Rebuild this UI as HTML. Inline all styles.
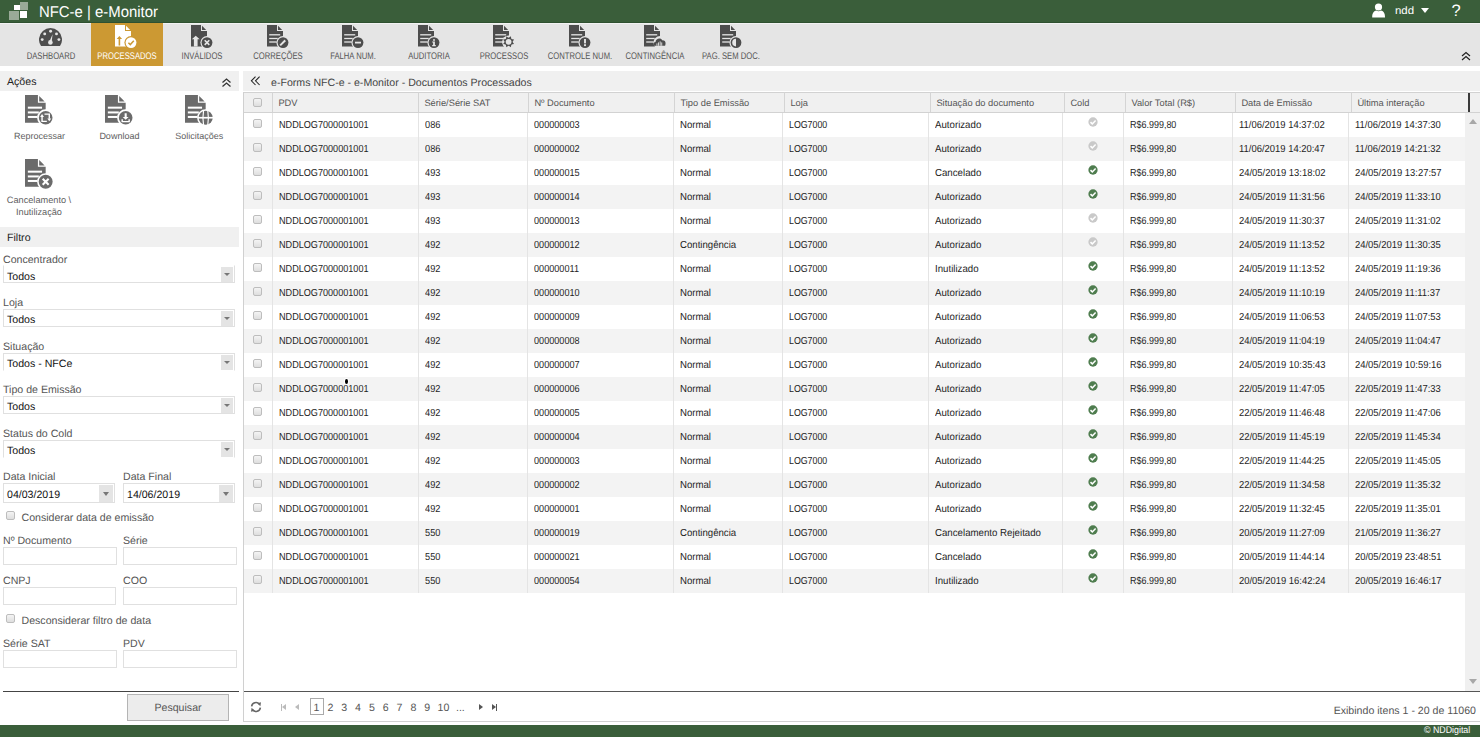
<!DOCTYPE html>
<html><head><meta charset="utf-8">
<style>
*{margin:0;padding:0;box-sizing:border-box}
html,body{width:1480px;height:737px;overflow:hidden;background:#fff;font-family:"Liberation Sans",sans-serif;color:#222;text-rendering:geometricPrecision}
.abs{position:absolute}
.t,.lbl,.hc,.ti .lb,.sel .v{translate:0 1px}
.t{position:absolute;white-space:nowrap;line-height:1}
#top{position:absolute;left:0;top:0;width:1480px;height:23px;background:#3a5e3a;border-bottom:1px solid #2f5130}
#tb{position:absolute;left:0;top:23px;width:1480px;height:43px;background:#e5e5e5;border-top:1px solid #f2f2f2}
.ti{position:absolute;top:0;height:43px}
.ti .lb{position:absolute;width:100px;left:-14px;top:26.5px;font-size:9.6px;line-height:1;color:#4a4a4a;white-space:nowrap;text-align:center;transform:scaleX(0.8);transform-origin:50% 0}
.act{background:#cc9933}
.bar{position:absolute;background:#f0f0f0}
.lbl{position:absolute;font-size:10.6px;line-height:1;color:#555;white-space:nowrap}
.inp{position:absolute;border:1px solid #e0e0e0;background:#fff;height:18px}
.sel .v{position:absolute;left:3px;top:4px;font-size:10.6px;line-height:1;color:#111;white-space:nowrap}
.sel .bt{position:absolute;right:1px;top:1px;width:12px;height:15px;background:#e4e4e4}
.sel .bt2:after{display:none}
.sel .bt:after{content:"";position:absolute;left:3px;top:6px;border-left:3px solid transparent;border-right:3px solid transparent;border-top:3px solid #777}
.cb{position:absolute;width:9px;height:9px;border:1px solid #bdbdbd;border-radius:2px;background:linear-gradient(#f4f4f4,#dedede)}
.hl{position:absolute;top:92px;width:1px;height:20px;background:#d4d4d4}
.bl{position:absolute;top:113px;width:1px;height:480px;background:#e4e4e4}
.row{position:absolute;left:244px;width:1221px;height:24px}
.c{position:absolute;font-size:10.2px;line-height:1;color:#1e1e1e;white-space:nowrap;transform-origin:0 0}
.hc{position:absolute;top:97.8px;font-size:9.3px;line-height:1;color:#555;white-space:nowrap}
</style></head><body>
<div id="top">
  <div class="abs" style="left:14px;top:5px;width:6px;height:5px;background:#fff"></div>
  <div class="abs" style="left:20px;top:2px;width:8px;height:8px;background:#9aaa98"></div>
  <div class="abs" style="left:9px;top:11px;width:10px;height:9px;background:#9aaa98"></div>
  <div class="abs" style="left:20px;top:11px;width:7px;height:7px;background:#fff"></div>
  <div class="t" style="left:39px;top:4px;font-size:15.6px;color:#fff;transform:scaleX(0.955);transform-origin:0 0">NFC-e | e-Monitor</div>
  <svg class="abs" style="left:1371px;top:2px" width="16" height="16" viewBox="0 0 16 16"><circle cx="7.5" cy="5" r="3.6" fill="#fff"/><path d="M1.2 15.5C1 10.5 3.5 9 5.2 8.6C6.6 9.6 8.6 9.6 10 8.6C11.8 9 14.2 10.5 14 15.5Z" fill="#fff"/></svg>
  <div class="t" style="left:1395px;top:4.5px;font-size:10.8px;color:#fff;transform:scaleX(1.06);transform-origin:0 0">ndd</div>
  <div class="abs" style="left:1421px;top:8px;border-left:4.5px solid transparent;border-right:4.5px solid transparent;border-top:5px solid #fff"></div>
  <div class="t" style="left:1451.5px;top:2px;font-size:16.5px;color:#fff">?</div>
</div>
<div id="tb"><div class="ti" style="left:15.1px;width:72px;"><svg class="abs" style="left:24.2px;top:3.9px" width="23" height="19" viewBox="0 0 23 19"><path d="M2.01 18.1A11.5 11.5 0 1 1 20.99 18.1Z" fill="#4d4d4d"/><circle cx="11.6" cy="3.3" r="1.45" fill="#e5e5e5"/><circle cx="5.7" cy="5.9" r="1.45" fill="#e5e5e5"/><circle cx="17.5" cy="5.9" r="1.45" fill="#e5e5e5"/><circle cx="3.2" cy="11.6" r="1.45" fill="#e5e5e5"/><circle cx="19.9" cy="11.6" r="1.45" fill="#e5e5e5"/><path d="M13.6 6.2L12.6 14L10.4 13.6Z" fill="#e5e5e5"/><circle cx="11.4" cy="14.4" r="2.3" fill="#e5e5e5"/></svg><div class="lb" style="color:#555;">DASHBOARD</div></div><div class="ti act" style="left:90.6px;width:72px;top:-1px;height:43px;"><svg class="abs" style="left:24.5px;top:2px;" width="24" height="24" viewBox="0 0 24 24"><path d="M0 0H10V6H16V21.5H0Z" fill="#fff"/><path d="M11 0.8L15.2 5H11Z" fill="#fff"/><path d="M1.7 13.9L4.4 10.9L7.1 13.9H5.2V20.6H3.6V13.9Z" fill="#cc9933"/><circle cx="16" cy="17.6" r="6.6" fill="#cc9933"/><circle cx="16" cy="17.6" r="5.4" fill="#fff"/><path d="M13.4 17.700000000000003L15.3 19.6L18.8 15.8" stroke="#cc9933" stroke-width="1.5" fill="none"/></svg><div class="lb" style="color:#fff;top:27.5px;">PROCESSADOS</div></div><div class="ti" style="left:166.1px;width:72px;"><svg class="abs" style="left:25px;top:1px;" width="24" height="24" viewBox="0 0 24 24"><path d="M0 0H10V6H16V21.5H0Z" fill="#4d4d4d"/><path d="M11 0.8L15.2 5H11Z" fill="#4d4d4d"/><path d="M0.8 14.2L4.75 10.8L8.7 14.2H6.6V21.5H2.9V14.2Z" fill="#e5e5e5"/><circle cx="16" cy="17.6" r="6.6" fill="#e5e5e5"/><circle cx="16" cy="17.6" r="5.4" fill="#4d4d4d"/><path d="M13.7 15.3L18.3 19.900000000000002M18.3 15.3L13.7 19.900000000000002" stroke="#e5e5e5" stroke-width="1.6"/></svg><div class="lb" style="color:#555;">INVÁLIDOS</div></div><div class="ti" style="left:241.6px;width:72px;"><svg class="abs" style="left:25px;top:1px;" width="24" height="24" viewBox="0 0 24 24"><path d="M0 0H10V6H16V21.5H0Z" fill="#4d4d4d"/><path d="M11 0.8L15.2 5H11Z" fill="#4d4d4d"/><rect x="2.2" y="9.15" width="11" height="1.3" fill="#e5e5e5"/><rect x="2.2" y="12.85" width="8.5" height="1.3" fill="#e5e5e5"/><rect x="2.2" y="16.35" width="7.5" height="1.3" fill="#e5e5e5"/><circle cx="16" cy="17.6" r="6.6" fill="#e5e5e5"/><circle cx="16" cy="17.6" r="5.4" fill="#4d4d4d"/><path d="M13.2 20.400000000000002L18.4 15.200000000000001" stroke="#e5e5e5" stroke-width="2"/><path d="M17.6 14.400000000000002L19.2 16.0" stroke="#4d4d4d" stroke-width="0.6"/></svg><div class="lb" style="color:#555;">CORREÇÕES</div></div><div class="ti" style="left:317.1px;width:72px;"><svg class="abs" style="left:25px;top:1px;" width="24" height="24" viewBox="0 0 24 24"><path d="M0 0H10V6H16V21.5H0Z" fill="#4d4d4d"/><path d="M11 0.8L15.2 5H11Z" fill="#4d4d4d"/><rect x="2.2" y="9.15" width="11" height="1.3" fill="#e5e5e5"/><rect x="2.2" y="12.85" width="8.5" height="1.3" fill="#e5e5e5"/><rect x="2.2" y="16.35" width="7.5" height="1.3" fill="#e5e5e5"/><circle cx="16" cy="17.6" r="6.6" fill="#e5e5e5"/><circle cx="16" cy="17.6" r="5.4" fill="#4d4d4d"/><rect x="13" y="16.700000000000003" width="6" height="1.8" fill="#e5e5e5"/></svg><div class="lb" style="color:#555;">FALHA NUM.</div></div><div class="ti" style="left:392.6px;width:72px;"><svg class="abs" style="left:25px;top:1px;" width="24" height="24" viewBox="0 0 24 24"><path d="M0 0H10V6H16V21.5H0Z" fill="#4d4d4d"/><path d="M11 0.8L15.2 5H11Z" fill="#4d4d4d"/><rect x="2.2" y="9.15" width="11" height="1.3" fill="#e5e5e5"/><rect x="2.2" y="12.85" width="8.5" height="1.3" fill="#e5e5e5"/><rect x="2.2" y="16.35" width="7.5" height="1.3" fill="#e5e5e5"/><circle cx="16" cy="17.6" r="6.6" fill="#e5e5e5"/><circle cx="16" cy="17.6" r="5.4" fill="#4d4d4d"/><rect x="15.1" y="14.200000000000001" width="1.8" height="1.6" fill="#e5e5e5"/><path d="M14.2 16.6H16.9V20.0H17.8V21.200000000000003H14.2V20.0H15.1V17.6H14.2Z" fill="#e5e5e5"/></svg><div class="lb" style="color:#555;">AUDITORIA</div></div><div class="ti" style="left:468.1px;width:72px;"><svg class="abs" style="left:25px;top:1px;" width="24" height="24" viewBox="0 0 24 24"><path d="M0 0H10V6H16V21.5H0Z" fill="#4d4d4d"/><path d="M11 0.8L15.2 5H11Z" fill="#4d4d4d"/><rect x="2.2" y="9.15" width="11" height="1.3" fill="#e5e5e5"/><rect x="2.2" y="12.85" width="8.5" height="1.3" fill="#e5e5e5"/><rect x="2.2" y="16.35" width="7.5" height="1.3" fill="#e5e5e5"/><circle cx="16" cy="17.6" r="6.6" fill="#e5e5e5"/><circle cx="15.6" cy="16.8" r="6.4" fill="#e5e5e5"/><polygon points="21.05,19.06 19.42,19.36 18.43,19.63 18.16,20.62 17.86,22.25 16.50,21.31 15.60,20.80 14.70,21.31 13.34,22.25 13.04,20.62 12.77,19.63 11.78,19.36 10.15,19.06 11.09,17.70 11.60,16.80 11.09,15.90 10.15,14.54 11.78,14.24 12.77,13.97 13.04,12.98 13.34,11.35 14.70,12.29 15.60,12.80 16.50,12.29 17.86,11.35 18.16,12.98 18.43,13.97 19.42,14.24 21.05,14.54 20.11,15.90 19.60,16.80 20.11,17.70" fill="#4d4d4d"/><circle cx="15.6" cy="16.8" r="2.9" fill="#e5e5e5"/></svg><div class="lb" style="color:#555;">PROCESSOS</div></div><div class="ti" style="left:543.6px;width:72px;"><svg class="abs" style="left:25px;top:1px;" width="24" height="24" viewBox="0 0 24 24"><path d="M0 0H10V6H16V21.5H0Z" fill="#4d4d4d"/><path d="M11 0.8L15.2 5H11Z" fill="#4d4d4d"/><rect x="2.2" y="9.15" width="11" height="1.3" fill="#e5e5e5"/><rect x="2.2" y="12.85" width="8.5" height="1.3" fill="#e5e5e5"/><rect x="2.2" y="16.35" width="7.5" height="1.3" fill="#e5e5e5"/><circle cx="16" cy="17.6" r="6.6" fill="#e5e5e5"/><circle cx="16" cy="17.6" r="5.4" fill="#4d4d4d"/><rect x="15.05" y="14.000000000000002" width="1.9" height="4.4" fill="#e5e5e5"/><rect x="15.05" y="19.200000000000003" width="1.9" height="1.9" fill="#e5e5e5"/></svg><div class="lb" style="color:#555;">CONTROLE NUM.</div></div><div class="ti" style="left:619.1px;width:72px;"><svg class="abs" style="left:25px;top:1px;" width="24" height="24" viewBox="0 0 24 24"><path d="M0 0H10V6H16V21.5H0Z" fill="#4d4d4d"/><path d="M11 0.8L15.2 5H11Z" fill="#4d4d4d"/><rect x="2.2" y="9.15" width="11" height="1.3" fill="#e5e5e5"/><rect x="2.2" y="12.85" width="8.5" height="1.3" fill="#e5e5e5"/><rect x="2.2" y="16.35" width="7.5" height="1.3" fill="#e5e5e5"/><circle cx="16" cy="17.6" r="6.6" fill="#e5e5e5"/><path d="M10.5 20.8C9.1 20.8 9.1 17.0 11.5 17.0C11.7 13.200000000000001 16.9 12.000000000000002 18.3 15.400000000000002C21.299999999999997 15.000000000000002 22.299999999999997 18.0 21.1 20.8Z" fill="#4d4d4d"/><rect x="12.5" y="18.400000000000002" width="0.9" height="2.4" fill="#e5e5e5"/><rect x="14.1" y="17.400000000000002" width="0.9" height="3.4" fill="#e5e5e5"/><rect x="15.7" y="16.400000000000002" width="0.9" height="4.4" fill="#e5e5e5"/><rect x="17.3" y="17.400000000000002" width="0.9" height="3.4" fill="#e5e5e5"/></svg><div class="lb" style="color:#555;">CONTINGÊNCIA</div></div><div class="ti" style="left:694.6px;width:72px;"><svg class="abs" style="left:25px;top:1px;" width="24" height="24" viewBox="0 0 24 24"><path d="M0 0H10V6H16V21.5H0Z" fill="#4d4d4d"/><path d="M11 0.8L15.2 5H11Z" fill="#4d4d4d"/><rect x="2.2" y="9.15" width="11" height="1.3" fill="#e5e5e5"/><rect x="2.2" y="12.85" width="8.5" height="1.3" fill="#e5e5e5"/><rect x="2.2" y="16.35" width="7.5" height="1.3" fill="#e5e5e5"/><circle cx="16" cy="17.6" r="6.6" fill="#e5e5e5"/><circle cx="16" cy="17.6" r="4.6" fill="#e5e5e5" stroke="#4d4d4d" stroke-width="1.6"/><path d="M16 13.000000000000002A4.6 4.6 0 0 1 16 22.200000000000003Z" fill="#4d4d4d"/></svg><div class="lb" style="color:#555;">PAG. SEM DOC.</div></div><svg class="abs" style="left:1461px;top:27px" width="10" height="10" viewBox="0 0 10 10"><path d="M1 5L5 1.5L9 5M1 9L5 5.5L9 9" stroke="#222" stroke-width="1.2" fill="none"/></svg></div><div class="bar" style="left:0;top:71px;width:239px;height:20px"></div><div class="t" style="left:7px;top:76px;font-size:10.6px;color:#222">Ações</div><svg class="abs" style="left:220.5px;top:76.5px" width="11" height="11" viewBox="0 0 11 11"><path d="M1.5 5.5L5.5 2L9.5 5.5M1.5 9.5L5.5 6L9.5 9.5" stroke="#333" stroke-width="1.3" fill="none"/></svg><svg class="abs" style="left:25.4px;top:94.8px;" width="31" height="31" viewBox="0 0 24 24"><path d="M0 0H10V6H16V21.5H0Z" fill="#6b6b6b"/><path d="M11 0.8L15.2 5H11Z" fill="#6b6b6b"/><rect x="2.2" y="9.025" width="11" height="1.55" fill="#fff"/><rect x="2.2" y="12.725" width="8.5" height="1.55" fill="#fff"/><rect x="2.2" y="16.224999999999998" width="7.5" height="1.55" fill="#fff"/><circle cx="16" cy="17.6" r="6.6" fill="#fff"/><circle cx="16" cy="17.6" r="5.3" fill="#6b6b6b"/><path d="M13.2 16.8V20.400000000000002H16.9M18.8 18.400000000000002V14.8H15.1" stroke="#fff" stroke-width="1.1" fill="none"/><path d="M11.7 17.0L13.2 14.8L14.7 17.0Z" fill="#fff"/><path d="M17.3 18.200000000000003L18.8 20.400000000000002L20.3 18.200000000000003Z" fill="#fff"/></svg><div class="t" style="left:-10.600000000000001px;width:100px;text-align:center;top:130.7px;font-size:9px;color:#606060">Reprocessar</div><svg class="abs" style="left:105.4px;top:94.8px;" width="31" height="31" viewBox="0 0 24 24"><path d="M0 0H10V6H16V21.5H0Z" fill="#6b6b6b"/><path d="M11 0.8L15.2 5H11Z" fill="#6b6b6b"/><rect x="2.2" y="9.025" width="11" height="1.55" fill="#fff"/><rect x="2.2" y="12.725" width="8.5" height="1.55" fill="#fff"/><rect x="2.2" y="16.224999999999998" width="7.5" height="1.55" fill="#fff"/><circle cx="16" cy="17.6" r="6.6" fill="#fff"/><circle cx="16" cy="17.6" r="5.3" fill="#6b6b6b"/><path d="M15.2 14.200000000000001H16.8V17.0H18.3L16 19.200000000000003L13.7 17.0H15.2Z" fill="#fff"/><path d="M13.3 18.8V20.6H18.7V18.8" stroke="#fff" stroke-width="1.1" fill="none"/></svg><div class="t" style="left:69.4px;width:100px;text-align:center;top:130.7px;font-size:9px;color:#606060">Download</div><svg class="abs" style="left:185.2px;top:94.8px;" width="31" height="31" viewBox="0 0 24 24"><path d="M0 0H10V6H16V21.5H0Z" fill="#6b6b6b"/><path d="M11 0.8L15.2 5H11Z" fill="#6b6b6b"/><rect x="2.2" y="9.025" width="11" height="1.55" fill="#fff"/><rect x="2.2" y="12.725" width="8.5" height="1.55" fill="#fff"/><rect x="2.2" y="16.224999999999998" width="7.5" height="1.55" fill="#fff"/><circle cx="16" cy="17.6" r="6.6" fill="#fff"/><circle cx="16" cy="17.6" r="5.5" fill="#6b6b6b"/><path d="M10 17.6H22" stroke="#fff" stroke-width="1.3"/><path d="M14.4 11.600000000000001Q13.4 17.6 14.4 23.6M17.6 11.600000000000001Q18.6 17.6 17.6 23.6" stroke="#fff" stroke-width="0.9" fill="none"/></svg><div class="t" style="left:149.2px;width:100px;text-align:center;top:130.7px;font-size:9px;color:#606060">Solicitações</div><svg class="abs" style="left:25.4px;top:159px;" width="31" height="31" viewBox="0 0 24 24"><path d="M0 0H10V6H16V21.5H0Z" fill="#6b6b6b"/><path d="M11 0.8L15.2 5H11Z" fill="#6b6b6b"/><rect x="2.2" y="9.025" width="11" height="1.55" fill="#fff"/><rect x="2.2" y="12.725" width="8.5" height="1.55" fill="#fff"/><rect x="2.2" y="16.224999999999998" width="7.5" height="1.55" fill="#fff"/><circle cx="16" cy="17.6" r="6.6" fill="#fff"/><circle cx="16" cy="17.6" r="5.4" fill="#6b6b6b"/><path d="M13.7 15.3L18.3 19.900000000000002M18.3 15.3L13.7 19.900000000000002" stroke="#fff" stroke-width="1.6"/></svg><div class="t" style="left:-11px;width:100px;text-align:center;top:194.4px;font-size:9.2px;color:#606060;line-height:11.8px">Cancelamento \<br>Inutilização</div><div class="bar" style="left:0;top:227px;width:239px;height:20px"></div><div class="t" style="left:7px;top:232px;font-size:10.6px;color:#222">Filtro</div><div class="lbl" style="left:3px;top:254px">Concentrador</div><div class="inp sel" style="left:3px;top:265px;width:232px;height:18px;border-top-color:#fff"><div class="v" style="top:5px">Todos</div><div class="bt" style="height:15px"></div></div><div class="lbl" style="left:3px;top:297px">Loja</div><div class="inp sel" style="left:3px;top:309px;width:232px;height:18px;"><div class="v" style="top:4px">Todos</div><div class="bt" style="height:15px;"></div></div><div class="lbl" style="left:3px;top:341px">Situação</div><div class="inp sel" style="left:3px;top:353px;width:232px;height:18px;border-bottom-color:#fff"><div class="v" style="top:4px">Todos - NFCe</div><div class="bt" style="height:15px;"></div></div><div class="lbl" style="left:3px;top:384px">Tipo de Emissão</div><div class="inp sel" style="left:3px;top:396px;width:232px;height:18px;"><div class="v" style="top:4px">Todos</div><div class="bt" style="height:15px;"></div></div><div class="lbl" style="left:3px;top:428px">Status do Cold</div><div class="inp sel" style="left:3px;top:440px;width:232px;height:18px;border-bottom-color:#fff"><div class="v" style="top:4px">Todos</div><div class="bt" style="height:15px;"></div></div><div class="lbl" style="left:3px;top:471px">Data Inicial</div><div class="inp sel" style="left:3px;top:483px;width:112px;height:20px;"><div class="v" style="top:5px">04/03/2019</div><div class="bt bt2" style="height:17px;width:14px;"><div class="abs" style="left:3.5px;top:7px;border-left:3.5px solid transparent;border-right:3.5px solid transparent;border-top:4px solid #777"></div></div></div><div class="lbl" style="left:123px;top:471px">Data Final</div><div class="inp sel" style="left:123px;top:483px;width:112px;height:20px;"><div class="v" style="top:5px">14/06/2019</div><div class="bt bt2" style="height:17px;width:14px;"><div class="abs" style="left:3.5px;top:7px;border-left:3.5px solid transparent;border-right:3.5px solid transparent;border-top:4px solid #777"></div></div></div><div class="cb" style="left:6px;top:511px"></div><div class="lbl" style="left:21.5px;top:512px">Considerar data de emissão</div><div class="lbl" style="left:3px;top:535px">Nº Documento</div><div class="inp" style="left:3px;top:547px;width:114px"></div><div class="lbl" style="left:123px;top:535px">Série</div><div class="inp" style="left:123px;top:547px;width:114px"></div><div class="lbl" style="left:3px;top:575px">CNPJ</div><div class="inp" style="left:3px;top:587px;width:113px"></div><div class="lbl" style="left:123px;top:575px">COO</div><div class="inp" style="left:123px;top:587px;width:114px"></div><div class="cb" style="left:6px;top:614px"></div><div class="lbl" style="left:21.5px;top:615px">Desconsiderar filtro de data</div><div class="lbl" style="left:3px;top:638px">Série SAT</div><div class="inp" style="left:3px;top:650px;width:114px"></div><div class="lbl" style="left:123px;top:638px">PDV</div><div class="inp" style="left:123px;top:650px;width:114px"></div><div class="abs" style="left:3px;top:691px;width:236px;height:1px;background:#444"></div><div class="abs" style="left:127px;top:694px;width:102px;height:27px;background:#ececec;border:1px solid #b4b4b4"></div><div class="t" style="left:127px;width:102px;text-align:center;top:702px;font-size:10.6px;color:#555">Pesquisar</div><div class="bar" style="left:243px;top:71px;width:1237px;height:20px"></div><svg class="abs" style="left:250px;top:75.5px" width="12" height="10" viewBox="0 0 12 10"><path d="M5.5 0.6L1.4 4.8L5.5 9M9.6 0.6L5.5 4.8L9.6 9" stroke="#222" stroke-width="1.05" fill="none"/></svg><div class="t" style="left:271px;top:77px;font-size:10.6px;color:#444">e-Forms NFC-e - e-Monitor - Documentos Processados</div><div class="abs" style="left:243px;top:92px;width:1237px;height:630px;border-left:1px solid #d0d0d0;border-bottom:1px solid #d0d0d0"></div><div class="abs" style="left:244px;top:92px;width:1236px;height:21px;background:#f0f0f0;border-top:1px solid #d2d2d2;border-bottom:1px solid #d2d2d2"></div><div class="hl" style="left:272px"></div><div class="hl" style="left:418px"></div><div class="hl" style="left:528px"></div><div class="hl" style="left:674px"></div><div class="hl" style="left:784px"></div><div class="hl" style="left:930px"></div><div class="hl" style="left:1064px"></div><div class="hl" style="left:1125px"></div><div class="hl" style="left:1235px"></div><div class="hl" style="left:1351px"></div><div class="abs" style="left:1468px;top:93px;width:1.5px;height:19px;background:#3a3a3a"></div><div class="cb" style="left:253px;top:98px"></div><div class="hc" style="left:278.4px">PDV</div><div class="hc" style="left:424.4px">Série/Série SAT</div><div class="hc" style="left:534.4px">Nº Documento</div><div class="hc" style="left:680.4px">Tipo de Emissão</div><div class="hc" style="left:790.4px">Loja</div><div class="hc" style="left:936.4px">Situação do documento</div><div class="hc" style="left:1070.4px">Cold</div><div class="hc" style="left:1131.4px">Valor Total (R$)</div><div class="hc" style="left:1241.4px">Data de Emissão</div><div class="hc" style="left:1357.4px">Última interação</div><div class="row" style="top:113px;background:#fff"></div><div class="row" style="top:137px;background:#f3f3f3"></div><div class="row" style="top:161px;background:#fff"></div><div class="row" style="top:185px;background:#f3f3f3"></div><div class="row" style="top:209px;background:#fff"></div><div class="row" style="top:233px;background:#f3f3f3"></div><div class="row" style="top:257px;background:#fff"></div><div class="row" style="top:281px;background:#f3f3f3"></div><div class="row" style="top:305px;background:#fff"></div><div class="row" style="top:329px;background:#f3f3f3"></div><div class="row" style="top:353px;background:#fff"></div><div class="row" style="top:377px;background:#f3f3f3"></div><div class="row" style="top:401px;background:#fff"></div><div class="row" style="top:425px;background:#f3f3f3"></div><div class="row" style="top:449px;background:#fff"></div><div class="row" style="top:473px;background:#f3f3f3"></div><div class="row" style="top:497px;background:#fff"></div><div class="row" style="top:521px;background:#f3f3f3"></div><div class="row" style="top:545px;background:#fff"></div><div class="row" style="top:569px;background:#f3f3f3"></div><div class="bl" style="left:272px"></div><div class="bl" style="left:418px"></div><div class="bl" style="left:527px"></div><div class="bl" style="left:673px"></div><div class="bl" style="left:782px"></div><div class="bl" style="left:928px"></div><div class="bl" style="left:1062px"></div><div class="bl" style="left:1123px"></div><div class="bl" style="left:1232px"></div><div class="bl" style="left:1348px"></div><div class="cb" style="left:253px;top:119px"></div><div class="c" style="left:278.6px;top:121.37px;transform:scaleX(0.893)">NDDLOG7000001001</div><div class="c" style="left:424.6px;top:121.37px;transform:scaleX(0.905)">086</div><div class="c" style="left:533.6px;top:121.37px;transform:scaleX(0.895)">000000003</div><div class="c" style="left:679.6px;top:121.37px;transform:scaleX(0.944)">Normal</div><div class="c" style="left:788.6px;top:121.37px;transform:scaleX(0.865)">LOG7000</div><div class="c" style="left:934.6px;top:121.37px;transform:scaleX(0.95)">Autorizado</div><svg class="abs" style="left:1087.6px;top:117.1px" width="10" height="10" viewBox="0 0 10 10"><circle cx="5" cy="5" r="4.65" fill="#c9c9c9"/><path d="M2.5 5.1L4.3 6.9L7.6 3.4" stroke="#fff" stroke-width="1.5" fill="none"/></svg><div class="c" style="left:1129.6px;top:121.37px;transform:scaleX(0.88)">R$6.999,80</div><div class="c" style="left:1238.6px;top:121.37px;transform:scaleX(0.926)">11/06/2019 14:37:02</div><div class="c" style="left:1354.6px;top:121.37px;transform:scaleX(0.926)">11/06/2019 14:37:30</div><div class="cb" style="left:253px;top:143px"></div><div class="c" style="left:278.6px;top:145.37px;transform:scaleX(0.893)">NDDLOG7000001001</div><div class="c" style="left:424.6px;top:145.37px;transform:scaleX(0.905)">086</div><div class="c" style="left:533.6px;top:145.37px;transform:scaleX(0.895)">000000002</div><div class="c" style="left:679.6px;top:145.37px;transform:scaleX(0.944)">Normal</div><div class="c" style="left:788.6px;top:145.37px;transform:scaleX(0.865)">LOG7000</div><div class="c" style="left:934.6px;top:145.37px;transform:scaleX(0.95)">Autorizado</div><svg class="abs" style="left:1087.6px;top:141.1px" width="10" height="10" viewBox="0 0 10 10"><circle cx="5" cy="5" r="4.65" fill="#c9c9c9"/><path d="M2.5 5.1L4.3 6.9L7.6 3.4" stroke="#fff" stroke-width="1.5" fill="none"/></svg><div class="c" style="left:1129.6px;top:145.37px;transform:scaleX(0.88)">R$6.999,80</div><div class="c" style="left:1238.6px;top:145.37px;transform:scaleX(0.926)">11/06/2019 14:20:47</div><div class="c" style="left:1354.6px;top:145.37px;transform:scaleX(0.926)">11/06/2019 14:21:32</div><div class="cb" style="left:253px;top:167px"></div><div class="c" style="left:278.6px;top:169.37px;transform:scaleX(0.893)">NDDLOG7000001001</div><div class="c" style="left:424.6px;top:169.37px;transform:scaleX(0.905)">493</div><div class="c" style="left:533.6px;top:169.37px;transform:scaleX(0.895)">000000015</div><div class="c" style="left:679.6px;top:169.37px;transform:scaleX(0.944)">Normal</div><div class="c" style="left:788.6px;top:169.37px;transform:scaleX(0.865)">LOG7000</div><div class="c" style="left:934.6px;top:169.37px;transform:scaleX(0.95)">Cancelado</div><svg class="abs" style="left:1087.6px;top:165.1px" width="10" height="10" viewBox="0 0 10 10"><circle cx="5" cy="5" r="4.65" fill="#4f7d4f"/><path d="M2.5 5.1L4.3 6.9L7.6 3.4" stroke="#fff" stroke-width="1.5" fill="none"/></svg><div class="c" style="left:1129.6px;top:169.37px;transform:scaleX(0.88)">R$6.999,80</div><div class="c" style="left:1238.6px;top:169.37px;transform:scaleX(0.926)">24/05/2019 13:18:02</div><div class="c" style="left:1354.6px;top:169.37px;transform:scaleX(0.926)">24/05/2019 13:27:57</div><div class="cb" style="left:253px;top:191px"></div><div class="c" style="left:278.6px;top:193.37px;transform:scaleX(0.893)">NDDLOG7000001001</div><div class="c" style="left:424.6px;top:193.37px;transform:scaleX(0.905)">493</div><div class="c" style="left:533.6px;top:193.37px;transform:scaleX(0.895)">000000014</div><div class="c" style="left:679.6px;top:193.37px;transform:scaleX(0.944)">Normal</div><div class="c" style="left:788.6px;top:193.37px;transform:scaleX(0.865)">LOG7000</div><div class="c" style="left:934.6px;top:193.37px;transform:scaleX(0.95)">Autorizado</div><svg class="abs" style="left:1087.6px;top:189.1px" width="10" height="10" viewBox="0 0 10 10"><circle cx="5" cy="5" r="4.65" fill="#4f7d4f"/><path d="M2.5 5.1L4.3 6.9L7.6 3.4" stroke="#fff" stroke-width="1.5" fill="none"/></svg><div class="c" style="left:1129.6px;top:193.37px;transform:scaleX(0.88)">R$6.999,80</div><div class="c" style="left:1238.6px;top:193.37px;transform:scaleX(0.926)">24/05/2019 11:31:56</div><div class="c" style="left:1354.6px;top:193.37px;transform:scaleX(0.926)">24/05/2019 11:33:10</div><div class="cb" style="left:253px;top:215px"></div><div class="c" style="left:278.6px;top:217.37px;transform:scaleX(0.893)">NDDLOG7000001001</div><div class="c" style="left:424.6px;top:217.37px;transform:scaleX(0.905)">493</div><div class="c" style="left:533.6px;top:217.37px;transform:scaleX(0.895)">000000013</div><div class="c" style="left:679.6px;top:217.37px;transform:scaleX(0.944)">Normal</div><div class="c" style="left:788.6px;top:217.37px;transform:scaleX(0.865)">LOG7000</div><div class="c" style="left:934.6px;top:217.37px;transform:scaleX(0.95)">Autorizado</div><svg class="abs" style="left:1087.6px;top:213.1px" width="10" height="10" viewBox="0 0 10 10"><circle cx="5" cy="5" r="4.65" fill="#c9c9c9"/><path d="M2.5 5.1L4.3 6.9L7.6 3.4" stroke="#fff" stroke-width="1.5" fill="none"/></svg><div class="c" style="left:1129.6px;top:217.37px;transform:scaleX(0.88)">R$6.999,80</div><div class="c" style="left:1238.6px;top:217.37px;transform:scaleX(0.926)">24/05/2019 11:30:37</div><div class="c" style="left:1354.6px;top:217.37px;transform:scaleX(0.926)">24/05/2019 11:31:02</div><div class="cb" style="left:253px;top:239px"></div><div class="c" style="left:278.6px;top:241.37px;transform:scaleX(0.893)">NDDLOG7000001001</div><div class="c" style="left:424.6px;top:241.37px;transform:scaleX(0.905)">492</div><div class="c" style="left:533.6px;top:241.37px;transform:scaleX(0.895)">000000012</div><div class="c" style="left:679.6px;top:241.37px;transform:scaleX(0.944)">Contingência</div><div class="c" style="left:788.6px;top:241.37px;transform:scaleX(0.865)">LOG7000</div><div class="c" style="left:934.6px;top:241.37px;transform:scaleX(0.95)">Autorizado</div><svg class="abs" style="left:1087.6px;top:237.1px" width="10" height="10" viewBox="0 0 10 10"><circle cx="5" cy="5" r="4.65" fill="#c9c9c9"/><path d="M2.5 5.1L4.3 6.9L7.6 3.4" stroke="#fff" stroke-width="1.5" fill="none"/></svg><div class="c" style="left:1129.6px;top:241.37px;transform:scaleX(0.88)">R$6.999,80</div><div class="c" style="left:1238.6px;top:241.37px;transform:scaleX(0.926)">24/05/2019 11:13:52</div><div class="c" style="left:1354.6px;top:241.37px;transform:scaleX(0.926)">24/05/2019 11:30:35</div><div class="cb" style="left:253px;top:263px"></div><div class="c" style="left:278.6px;top:265.37px;transform:scaleX(0.893)">NDDLOG7000001001</div><div class="c" style="left:424.6px;top:265.37px;transform:scaleX(0.905)">492</div><div class="c" style="left:533.6px;top:265.37px;transform:scaleX(0.895)">000000011</div><div class="c" style="left:679.6px;top:265.37px;transform:scaleX(0.944)">Normal</div><div class="c" style="left:788.6px;top:265.37px;transform:scaleX(0.865)">LOG7000</div><div class="c" style="left:934.6px;top:265.37px;transform:scaleX(0.95)">Inutilizado</div><svg class="abs" style="left:1087.6px;top:261.1px" width="10" height="10" viewBox="0 0 10 10"><circle cx="5" cy="5" r="4.65" fill="#4f7d4f"/><path d="M2.5 5.1L4.3 6.9L7.6 3.4" stroke="#fff" stroke-width="1.5" fill="none"/></svg><div class="c" style="left:1129.6px;top:265.37px;transform:scaleX(0.88)">R$6.999,80</div><div class="c" style="left:1238.6px;top:265.37px;transform:scaleX(0.926)">24/05/2019 11:13:52</div><div class="c" style="left:1354.6px;top:265.37px;transform:scaleX(0.926)">24/05/2019 11:19:36</div><div class="cb" style="left:253px;top:287px"></div><div class="c" style="left:278.6px;top:289.37px;transform:scaleX(0.893)">NDDLOG7000001001</div><div class="c" style="left:424.6px;top:289.37px;transform:scaleX(0.905)">492</div><div class="c" style="left:533.6px;top:289.37px;transform:scaleX(0.895)">000000010</div><div class="c" style="left:679.6px;top:289.37px;transform:scaleX(0.944)">Normal</div><div class="c" style="left:788.6px;top:289.37px;transform:scaleX(0.865)">LOG7000</div><div class="c" style="left:934.6px;top:289.37px;transform:scaleX(0.95)">Autorizado</div><svg class="abs" style="left:1087.6px;top:285.1px" width="10" height="10" viewBox="0 0 10 10"><circle cx="5" cy="5" r="4.65" fill="#4f7d4f"/><path d="M2.5 5.1L4.3 6.9L7.6 3.4" stroke="#fff" stroke-width="1.5" fill="none"/></svg><div class="c" style="left:1129.6px;top:289.37px;transform:scaleX(0.88)">R$6.999,80</div><div class="c" style="left:1238.6px;top:289.37px;transform:scaleX(0.926)">24/05/2019 11:10:19</div><div class="c" style="left:1354.6px;top:289.37px;transform:scaleX(0.926)">24/05/2019 11:11:37</div><div class="cb" style="left:253px;top:311px"></div><div class="c" style="left:278.6px;top:313.37px;transform:scaleX(0.893)">NDDLOG7000001001</div><div class="c" style="left:424.6px;top:313.37px;transform:scaleX(0.905)">492</div><div class="c" style="left:533.6px;top:313.37px;transform:scaleX(0.895)">000000009</div><div class="c" style="left:679.6px;top:313.37px;transform:scaleX(0.944)">Normal</div><div class="c" style="left:788.6px;top:313.37px;transform:scaleX(0.865)">LOG7000</div><div class="c" style="left:934.6px;top:313.37px;transform:scaleX(0.95)">Autorizado</div><svg class="abs" style="left:1087.6px;top:309.1px" width="10" height="10" viewBox="0 0 10 10"><circle cx="5" cy="5" r="4.65" fill="#4f7d4f"/><path d="M2.5 5.1L4.3 6.9L7.6 3.4" stroke="#fff" stroke-width="1.5" fill="none"/></svg><div class="c" style="left:1129.6px;top:313.37px;transform:scaleX(0.88)">R$6.999,80</div><div class="c" style="left:1238.6px;top:313.37px;transform:scaleX(0.926)">24/05/2019 11:06:53</div><div class="c" style="left:1354.6px;top:313.37px;transform:scaleX(0.926)">24/05/2019 11:07:53</div><div class="cb" style="left:253px;top:335px"></div><div class="c" style="left:278.6px;top:337.37px;transform:scaleX(0.893)">NDDLOG7000001001</div><div class="c" style="left:424.6px;top:337.37px;transform:scaleX(0.905)">492</div><div class="c" style="left:533.6px;top:337.37px;transform:scaleX(0.895)">000000008</div><div class="c" style="left:679.6px;top:337.37px;transform:scaleX(0.944)">Normal</div><div class="c" style="left:788.6px;top:337.37px;transform:scaleX(0.865)">LOG7000</div><div class="c" style="left:934.6px;top:337.37px;transform:scaleX(0.95)">Autorizado</div><svg class="abs" style="left:1087.6px;top:333.1px" width="10" height="10" viewBox="0 0 10 10"><circle cx="5" cy="5" r="4.65" fill="#4f7d4f"/><path d="M2.5 5.1L4.3 6.9L7.6 3.4" stroke="#fff" stroke-width="1.5" fill="none"/></svg><div class="c" style="left:1129.6px;top:337.37px;transform:scaleX(0.88)">R$6.999,80</div><div class="c" style="left:1238.6px;top:337.37px;transform:scaleX(0.926)">24/05/2019 11:04:19</div><div class="c" style="left:1354.6px;top:337.37px;transform:scaleX(0.926)">24/05/2019 11:04:47</div><div class="cb" style="left:253px;top:359px"></div><div class="c" style="left:278.6px;top:361.37px;transform:scaleX(0.893)">NDDLOG7000001001</div><div class="c" style="left:424.6px;top:361.37px;transform:scaleX(0.905)">492</div><div class="c" style="left:533.6px;top:361.37px;transform:scaleX(0.895)">000000007</div><div class="c" style="left:679.6px;top:361.37px;transform:scaleX(0.944)">Normal</div><div class="c" style="left:788.6px;top:361.37px;transform:scaleX(0.865)">LOG7000</div><div class="c" style="left:934.6px;top:361.37px;transform:scaleX(0.95)">Autorizado</div><svg class="abs" style="left:1087.6px;top:357.1px" width="10" height="10" viewBox="0 0 10 10"><circle cx="5" cy="5" r="4.65" fill="#4f7d4f"/><path d="M2.5 5.1L4.3 6.9L7.6 3.4" stroke="#fff" stroke-width="1.5" fill="none"/></svg><div class="c" style="left:1129.6px;top:361.37px;transform:scaleX(0.88)">R$6.999,80</div><div class="c" style="left:1238.6px;top:361.37px;transform:scaleX(0.926)">24/05/2019 10:35:43</div><div class="c" style="left:1354.6px;top:361.37px;transform:scaleX(0.926)">24/05/2019 10:59:16</div><div class="cb" style="left:253px;top:383px"></div><div class="c" style="left:278.6px;top:385.37px;transform:scaleX(0.893)">NDDLOG7000001001</div><div class="c" style="left:424.6px;top:385.37px;transform:scaleX(0.905)">492</div><div class="c" style="left:533.6px;top:385.37px;transform:scaleX(0.895)">000000006</div><div class="c" style="left:679.6px;top:385.37px;transform:scaleX(0.944)">Normal</div><div class="c" style="left:788.6px;top:385.37px;transform:scaleX(0.865)">LOG7000</div><div class="c" style="left:934.6px;top:385.37px;transform:scaleX(0.95)">Autorizado</div><svg class="abs" style="left:1087.6px;top:381.1px" width="10" height="10" viewBox="0 0 10 10"><circle cx="5" cy="5" r="4.65" fill="#4f7d4f"/><path d="M2.5 5.1L4.3 6.9L7.6 3.4" stroke="#fff" stroke-width="1.5" fill="none"/></svg><div class="c" style="left:1129.6px;top:385.37px;transform:scaleX(0.88)">R$6.999,80</div><div class="c" style="left:1238.6px;top:385.37px;transform:scaleX(0.926)">22/05/2019 11:47:05</div><div class="c" style="left:1354.6px;top:385.37px;transform:scaleX(0.926)">22/05/2019 11:47:33</div><div class="cb" style="left:253px;top:407px"></div><div class="c" style="left:278.6px;top:409.37px;transform:scaleX(0.893)">NDDLOG7000001001</div><div class="c" style="left:424.6px;top:409.37px;transform:scaleX(0.905)">492</div><div class="c" style="left:533.6px;top:409.37px;transform:scaleX(0.895)">000000005</div><div class="c" style="left:679.6px;top:409.37px;transform:scaleX(0.944)">Normal</div><div class="c" style="left:788.6px;top:409.37px;transform:scaleX(0.865)">LOG7000</div><div class="c" style="left:934.6px;top:409.37px;transform:scaleX(0.95)">Autorizado</div><svg class="abs" style="left:1087.6px;top:405.1px" width="10" height="10" viewBox="0 0 10 10"><circle cx="5" cy="5" r="4.65" fill="#4f7d4f"/><path d="M2.5 5.1L4.3 6.9L7.6 3.4" stroke="#fff" stroke-width="1.5" fill="none"/></svg><div class="c" style="left:1129.6px;top:409.37px;transform:scaleX(0.88)">R$6.999,80</div><div class="c" style="left:1238.6px;top:409.37px;transform:scaleX(0.926)">22/05/2019 11:46:48</div><div class="c" style="left:1354.6px;top:409.37px;transform:scaleX(0.926)">22/05/2019 11:47:06</div><div class="cb" style="left:253px;top:431px"></div><div class="c" style="left:278.6px;top:433.37px;transform:scaleX(0.893)">NDDLOG7000001001</div><div class="c" style="left:424.6px;top:433.37px;transform:scaleX(0.905)">492</div><div class="c" style="left:533.6px;top:433.37px;transform:scaleX(0.895)">000000004</div><div class="c" style="left:679.6px;top:433.37px;transform:scaleX(0.944)">Normal</div><div class="c" style="left:788.6px;top:433.37px;transform:scaleX(0.865)">LOG7000</div><div class="c" style="left:934.6px;top:433.37px;transform:scaleX(0.95)">Autorizado</div><svg class="abs" style="left:1087.6px;top:429.1px" width="10" height="10" viewBox="0 0 10 10"><circle cx="5" cy="5" r="4.65" fill="#4f7d4f"/><path d="M2.5 5.1L4.3 6.9L7.6 3.4" stroke="#fff" stroke-width="1.5" fill="none"/></svg><div class="c" style="left:1129.6px;top:433.37px;transform:scaleX(0.88)">R$6.999,80</div><div class="c" style="left:1238.6px;top:433.37px;transform:scaleX(0.926)">22/05/2019 11:45:19</div><div class="c" style="left:1354.6px;top:433.37px;transform:scaleX(0.926)">22/05/2019 11:45:34</div><div class="cb" style="left:253px;top:455px"></div><div class="c" style="left:278.6px;top:457.37px;transform:scaleX(0.893)">NDDLOG7000001001</div><div class="c" style="left:424.6px;top:457.37px;transform:scaleX(0.905)">492</div><div class="c" style="left:533.6px;top:457.37px;transform:scaleX(0.895)">000000003</div><div class="c" style="left:679.6px;top:457.37px;transform:scaleX(0.944)">Normal</div><div class="c" style="left:788.6px;top:457.37px;transform:scaleX(0.865)">LOG7000</div><div class="c" style="left:934.6px;top:457.37px;transform:scaleX(0.95)">Autorizado</div><svg class="abs" style="left:1087.6px;top:453.1px" width="10" height="10" viewBox="0 0 10 10"><circle cx="5" cy="5" r="4.65" fill="#4f7d4f"/><path d="M2.5 5.1L4.3 6.9L7.6 3.4" stroke="#fff" stroke-width="1.5" fill="none"/></svg><div class="c" style="left:1129.6px;top:457.37px;transform:scaleX(0.88)">R$6.999,80</div><div class="c" style="left:1238.6px;top:457.37px;transform:scaleX(0.926)">22/05/2019 11:44:25</div><div class="c" style="left:1354.6px;top:457.37px;transform:scaleX(0.926)">22/05/2019 11:45:05</div><div class="cb" style="left:253px;top:479px"></div><div class="c" style="left:278.6px;top:481.37px;transform:scaleX(0.893)">NDDLOG7000001001</div><div class="c" style="left:424.6px;top:481.37px;transform:scaleX(0.905)">492</div><div class="c" style="left:533.6px;top:481.37px;transform:scaleX(0.895)">000000002</div><div class="c" style="left:679.6px;top:481.37px;transform:scaleX(0.944)">Normal</div><div class="c" style="left:788.6px;top:481.37px;transform:scaleX(0.865)">LOG7000</div><div class="c" style="left:934.6px;top:481.37px;transform:scaleX(0.95)">Autorizado</div><svg class="abs" style="left:1087.6px;top:477.1px" width="10" height="10" viewBox="0 0 10 10"><circle cx="5" cy="5" r="4.65" fill="#4f7d4f"/><path d="M2.5 5.1L4.3 6.9L7.6 3.4" stroke="#fff" stroke-width="1.5" fill="none"/></svg><div class="c" style="left:1129.6px;top:481.37px;transform:scaleX(0.88)">R$6.999,80</div><div class="c" style="left:1238.6px;top:481.37px;transform:scaleX(0.926)">22/05/2019 11:34:58</div><div class="c" style="left:1354.6px;top:481.37px;transform:scaleX(0.926)">22/05/2019 11:35:32</div><div class="cb" style="left:253px;top:503px"></div><div class="c" style="left:278.6px;top:505.37px;transform:scaleX(0.893)">NDDLOG7000001001</div><div class="c" style="left:424.6px;top:505.37px;transform:scaleX(0.905)">492</div><div class="c" style="left:533.6px;top:505.37px;transform:scaleX(0.895)">000000001</div><div class="c" style="left:679.6px;top:505.37px;transform:scaleX(0.944)">Normal</div><div class="c" style="left:788.6px;top:505.37px;transform:scaleX(0.865)">LOG7000</div><div class="c" style="left:934.6px;top:505.37px;transform:scaleX(0.95)">Autorizado</div><svg class="abs" style="left:1087.6px;top:501.1px" width="10" height="10" viewBox="0 0 10 10"><circle cx="5" cy="5" r="4.65" fill="#4f7d4f"/><path d="M2.5 5.1L4.3 6.9L7.6 3.4" stroke="#fff" stroke-width="1.5" fill="none"/></svg><div class="c" style="left:1129.6px;top:505.37px;transform:scaleX(0.88)">R$6.999,80</div><div class="c" style="left:1238.6px;top:505.37px;transform:scaleX(0.926)">22/05/2019 11:32:45</div><div class="c" style="left:1354.6px;top:505.37px;transform:scaleX(0.926)">22/05/2019 11:35:01</div><div class="cb" style="left:253px;top:527px"></div><div class="c" style="left:278.6px;top:529.37px;transform:scaleX(0.893)">NDDLOG7000001001</div><div class="c" style="left:424.6px;top:529.37px;transform:scaleX(0.905)">550</div><div class="c" style="left:533.6px;top:529.37px;transform:scaleX(0.895)">000000019</div><div class="c" style="left:679.6px;top:529.37px;transform:scaleX(0.944)">Contingência</div><div class="c" style="left:788.6px;top:529.37px;transform:scaleX(0.865)">LOG7000</div><div class="c" style="left:934.6px;top:529.37px;transform:scaleX(0.95)">Cancelamento Rejeitado</div><svg class="abs" style="left:1087.6px;top:525.1px" width="10" height="10" viewBox="0 0 10 10"><circle cx="5" cy="5" r="4.65" fill="#4f7d4f"/><path d="M2.5 5.1L4.3 6.9L7.6 3.4" stroke="#fff" stroke-width="1.5" fill="none"/></svg><div class="c" style="left:1129.6px;top:529.37px;transform:scaleX(0.88)">R$6.999,80</div><div class="c" style="left:1238.6px;top:529.37px;transform:scaleX(0.926)">20/05/2019 11:27:09</div><div class="c" style="left:1354.6px;top:529.37px;transform:scaleX(0.926)">21/05/2019 11:36:27</div><div class="cb" style="left:253px;top:551px"></div><div class="c" style="left:278.6px;top:553.37px;transform:scaleX(0.893)">NDDLOG7000001001</div><div class="c" style="left:424.6px;top:553.37px;transform:scaleX(0.905)">550</div><div class="c" style="left:533.6px;top:553.37px;transform:scaleX(0.895)">000000021</div><div class="c" style="left:679.6px;top:553.37px;transform:scaleX(0.944)">Normal</div><div class="c" style="left:788.6px;top:553.37px;transform:scaleX(0.865)">LOG7000</div><div class="c" style="left:934.6px;top:553.37px;transform:scaleX(0.95)">Cancelado</div><svg class="abs" style="left:1087.6px;top:549.1px" width="10" height="10" viewBox="0 0 10 10"><circle cx="5" cy="5" r="4.65" fill="#4f7d4f"/><path d="M2.5 5.1L4.3 6.9L7.6 3.4" stroke="#fff" stroke-width="1.5" fill="none"/></svg><div class="c" style="left:1129.6px;top:553.37px;transform:scaleX(0.88)">R$6.999,80</div><div class="c" style="left:1238.6px;top:553.37px;transform:scaleX(0.926)">20/05/2019 11:44:14</div><div class="c" style="left:1354.6px;top:553.37px;transform:scaleX(0.926)">20/05/2019 23:48:51</div><div class="cb" style="left:253px;top:575px"></div><div class="c" style="left:278.6px;top:577.37px;transform:scaleX(0.893)">NDDLOG7000001001</div><div class="c" style="left:424.6px;top:577.37px;transform:scaleX(0.905)">550</div><div class="c" style="left:533.6px;top:577.37px;transform:scaleX(0.895)">000000054</div><div class="c" style="left:679.6px;top:577.37px;transform:scaleX(0.944)">Normal</div><div class="c" style="left:788.6px;top:577.37px;transform:scaleX(0.865)">LOG7000</div><div class="c" style="left:934.6px;top:577.37px;transform:scaleX(0.95)">Inutilizado</div><svg class="abs" style="left:1087.6px;top:573.1px" width="10" height="10" viewBox="0 0 10 10"><circle cx="5" cy="5" r="4.65" fill="#4f7d4f"/><path d="M2.5 5.1L4.3 6.9L7.6 3.4" stroke="#fff" stroke-width="1.5" fill="none"/></svg><div class="c" style="left:1129.6px;top:577.37px;transform:scaleX(0.88)">R$6.999,80</div><div class="c" style="left:1238.6px;top:577.37px;transform:scaleX(0.926)">20/05/2019 16:42:24</div><div class="c" style="left:1354.6px;top:577.37px;transform:scaleX(0.926)">20/05/2019 16:46:17</div><div class="abs" style="left:344.8px;top:378.8px;width:3.4px;height:5px;border-radius:50%;background:#000;box-shadow:0 0 0 1px #fff"></div><div class="abs" style="left:1465px;top:113px;width:15px;height:578px;background:#f0f0f0"></div><div class="abs" style="left:1469px;top:119px;border-left:4.5px solid transparent;border-right:4.5px solid transparent;border-bottom:5px solid #a8a8a8"></div><div class="abs" style="left:1469px;top:679px;border-left:4.5px solid transparent;border-right:4.5px solid transparent;border-top:5px solid #a8a8a8"></div><div class="abs" style="left:244px;top:691px;width:1236px;height:1px;background:#555"></div><svg class="abs" style="left:250px;top:701px" width="12" height="12" viewBox="0 0 12 12"><path d="M1.6 5.4A4.4 4.4 0 0 1 9.4 3.2M10.4 6.6A4.4 4.4 0 0 1 2.6 8.8" stroke="#666" stroke-width="1.6" fill="none"/><path d="M7.2 2.2L11 1.2L10.4 5.2Z M4.8 9.8L1 10.8L1.6 6.8Z" fill="#666"/></svg><div class="abs" style="left:281px;top:704px;width:1px;height:7px;background:#bbb"></div><div class="abs" style="left:282px;top:704px;border-top:3.5px solid transparent;border-bottom:3.5px solid transparent;border-right:4px solid #bbb"></div><div class="abs" style="left:295px;top:704px;border-top:3.5px solid transparent;border-bottom:3.5px solid transparent;border-right:4px solid #bbb"></div><div class="abs" style="left:310px;top:698px;width:14px;height:17px;border:1px solid #aaa"></div><div class="t" style="left:313.5px;top:702px;font-size:10.6px;color:#555">1</div><div class="t" style="left:320.4px;width:20px;text-align:center;top:702px;font-size:10.6px;color:#555">2</div><div class="t" style="left:334.22999999999996px;width:20px;text-align:center;top:702px;font-size:10.6px;color:#555">3</div><div class="t" style="left:348.06px;width:20px;text-align:center;top:702px;font-size:10.6px;color:#555">4</div><div class="t" style="left:361.89px;width:20px;text-align:center;top:702px;font-size:10.6px;color:#555">5</div><div class="t" style="left:375.71999999999997px;width:20px;text-align:center;top:702px;font-size:10.6px;color:#555">6</div><div class="t" style="left:389.54999999999995px;width:20px;text-align:center;top:702px;font-size:10.6px;color:#555">7</div><div class="t" style="left:403.38px;width:20px;text-align:center;top:702px;font-size:10.6px;color:#555">8</div><div class="t" style="left:417.21px;width:20px;text-align:center;top:702px;font-size:10.6px;color:#555">9</div><div class="t" style="left:433.4px;width:20px;text-align:center;top:702px;font-size:10.6px;color:#555">10</div><div class="t" style="left:450.4px;width:20px;text-align:center;top:702px;font-size:10.6px;color:#555">...</div><div class="abs" style="left:479px;top:704px;border-top:3.5px solid transparent;border-bottom:3.5px solid transparent;border-left:4px solid #555"></div><div class="abs" style="left:492px;top:704px;border-top:3.5px solid transparent;border-bottom:3.5px solid transparent;border-left:4px solid #555"></div><div class="abs" style="left:496px;top:704px;width:1px;height:7px;background:#555"></div><div class="t" style="right:4px;top:704.5px;font-size:10.6px;color:#555">Exibindo itens 1 - 20 de 11060</div><div class="abs" style="left:0;top:725px;width:1480px;height:12px;background:#3a5e3a"></div><div class="t" style="left:1424px;top:724.6px;font-size:9.6px;color:#fff;transform:scaleX(0.92);transform-origin:0 0">© NDDigital</div></body></html>
